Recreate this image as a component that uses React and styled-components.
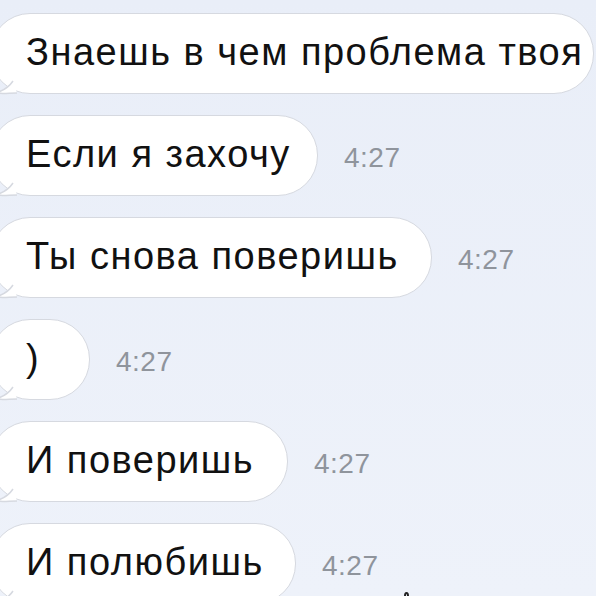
import React from "react";
import styled, { createGlobalStyle } from "styled-components";

const Global = createGlobalStyle`
  html, body { margin: 0; padding: 0; background: #edf1f9; overflow: hidden; }
  body { font-family: "Liberation Sans", Arial, sans-serif; }
`;

const Screen = styled.div`
  width: 596px;
  height: 596px;
  overflow: hidden;
  background: linear-gradient(180deg, #e9eef8 0%, #eef2fa 100%);
  display: flex;
  flex-direction: column;
  gap: 21px;
  padding-top: 13px;
  box-sizing: border-box;
  position: relative;
`;

const Row = styled.div`
  display: flex;
  align-items: center;
  gap: 26px;
  margin-left: -10px;
`;

const Bubble = styled.div`
  position: relative;
  height: 81px;
  box-sizing: border-box;
  flex-shrink: 0;
  display: flex;
  align-items: center;
  padding: 0 0 2px 35px;
  background: #ffffff;
  border: 1.5px solid #d6d9e0;
  border-radius: 40px;
  font-size: 38px;
  color: #111;
  white-space: nowrap;
  letter-spacing: 1.5px;
`;

const Tail = styled.svg`
  position: absolute;
  left: 4px;
  bottom: -2px;
  width: 22px;
  height: 16px;
  overflow: visible;
`;

const Time = styled.span`
  font-size: 28px;
  color: #8f949c;
  font-family: "Liberation Sans", Arial, sans-serif;
  letter-spacing: 0.5px;
  padding-top: 4px;
`;

const Mark = styled.span`
  position: absolute;
  left: 404px;
  bottom: -4px;
  width: 5px;
  height: 8px;
  border-radius: 50%;
  border: 2px solid #222;
  box-sizing: border-box;
`;

const messages = [
  { text: "Знаешь в чем проблема твоя", width: 604 },
  { text: "Если я захочу", time: "4:27", width: 328 },
  { text: "Ты снова поверишь", time: "4:27", width: 442 },
  { text: ")", time: "4:27", width: 100 },
  { text: "И поверишь", time: "4:27", width: 298 },
  { text: "И полюбишь", time: "4:27", width: 306 },
];

export default function App() {
  return (
    <>
      <Global />
      <Screen>
        {messages.map((m, i) => (
          <Row key={i}>
            <Bubble style={{ width: m.width }}>
              {m.text}
              <Tail viewBox="0 0 22 16">
                <path d="M18 2 C14 8 8 12 0 14 C8 15 14 14 22 14" fill="#fff" stroke="#d6d9e0" strokeWidth="1.5" />
              </Tail>
            </Bubble>
            {m.time && <Time>{m.time}</Time>}
          </Row>
        ))}
        <Mark />
      </Screen>
    </>
  );
}
